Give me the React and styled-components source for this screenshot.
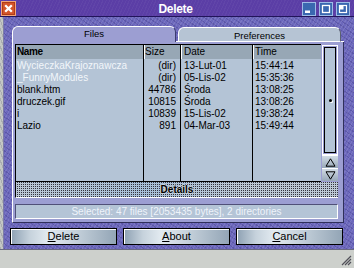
import React from 'react';
import styled, { createGlobalStyle } from 'styled-components';

const Global = createGlobalStyle`
  html, body { margin: 0; padding: 0; background: #cdd0cc; }
  body { width: 354px; height: 268px; overflow: hidden; font-family: "Liberation Sans", Arial, sans-serif; }
  * { box-sizing: border-box; }
`;

const Window = styled.div`
  width: 354px;
  height: 268px;
  display: flex;
  flex-direction: column;
  overflow: hidden;
`;

const TitleBar = styled.div`
  height: 17px;
  flex: none;
  background-color: #5b3ea6;
  background-image: repeating-linear-gradient(115deg, rgba(255,255,255,0.04) 0 1px, transparent 1px 3px);
  border-bottom: 1px solid #21145a;
  display: grid;
  grid-template-columns: 1fr auto 1fr;
  align-items: start;
  padding: 1px 4px 0 1px;
`;

const Title = styled.div`
  color: #fff;
  font-weight: bold;
  font-size: 12px;
  letter-spacing: -0.3px;
  line-height: 15px;
  padding-top: 1px;
`;

const WinButtons = styled.div`
  justify-self: end;
  display: flex;
  gap: 3px;
  padding-top: 1px;
`;

const Body = styled.div`
  flex: 1;
  display: flex;
  min-height: 0;
`;

const LeftEdge = styled.div`
  width: 4px;
  flex: none;
  background-color: #c4c8c4;
  background-image: repeating-linear-gradient(70deg, rgba(120,120,140,0.35) 0 1px, transparent 1px 3px);
  border-right: 1px solid #7c7ca8;
`;

const Content = styled.div`
  flex: 1;
  background-color: #6c68bc;
  background-image:
    repeating-linear-gradient(120deg, rgba(255,255,255,0.10) 0 1px, transparent 1px 3px),
    repeating-linear-gradient(35deg, rgba(30,20,90,0.20) 0 1px, transparent 1px 4px);
  display: flex;
  flex-direction: column;
  padding: 9px 0 4px;
`;

const TabRow = styled.div`
  height: 16px;
  margin: 0 10px 0 8px;
  display: flex;
  align-items: flex-end;
`;

const Tab = styled.div`
  width: ${p => p.$w}px;
  height: ${p => (p.$active ? 16 : 15)}px;
  flex: none;
  background: ${p => (p.$active ? '#9c9ed2' : '#b6c4d4')};
  border-top: 1px solid #fff;
  border-left: 1px solid #fff;
  border-right: 1px solid ${p => (p.$active ? '#3c3c70' : '#5a6070')};
  border-bottom: ${p => (p.$active ? 'none' : '1px solid #fff')};
  border-radius: 6px 6px 0 0;
  font-size: 9.5px;
  color: #000;
  text-align: center;
  line-height: 13px;
  padding-top: ${p => (p.$active ? 0 : 1)}px;
`;

const TabGap = styled.div`
  flex: ${p => (p.$fill ? 1 : 'none')};
  width: ${p => p.$w || 0}px;
  height: 1px;
  background: #fff;
`;

const Panel = styled.div`
  height: 181px;
  margin: 0 10px 0 8px;
  background: #9c9ed2;
  border-left: 1px solid #fff;
  border-right: 1px solid #30305a;
  border-bottom: 1px solid #30305a;
  padding: 2px 5px 0 2px;
  display: flex;
  flex-direction: column;
`;

const ListRow = styled.div`
  display: flex;
  height: 138px;
`;

const List = styled.div`
  width: 306px;
  height: 138px;
  background: #b4c4d6;
  border-top: 1px solid #000;
  border-left: 1px solid #000;
  border-bottom: 1px solid #000;
  display: grid;
  grid-template-columns: 128px 37px 72px 1fr;
`;

const Column = styled.div`
  display: flex;
  flex-direction: column;
  border-right: ${p => (p.$last ? 'none' : '1px solid #000')};
  font-size: 10px;
  text-align: ${p => (p.$right ? 'right' : 'left')};
`;

const HeadCell = styled.div`
  height: 14px;
  background: #97a7b5;
  box-shadow: ${p => (p.$first ? 'none' : 'inset 1px 0 0 #fff')};
  line-height: 14px;
  padding-left: ${p => p.$pl}px;
  font-weight: ${p => (p.$bold ? 'bold' : 'normal')};
  text-align: left;
  letter-spacing: ${p => (p.$bold ? '-0.4px' : '0')};
`;

const Cells = styled.div`
  padding-top: 1px;
`;

const Cell = styled.div`
  height: 12px;
  line-height: 12px;
  white-space: nowrap;
  color: ${p => (p.$dir ? '#f2f6fa' : '#000')};
  padding-left: ${p => p.$pl || 0}px;
  padding-right: ${p => p.$pr || 0}px;
`;

const Scroll = styled.div`
  width: 17px;
  height: 137px;
  display: flex;
  flex-direction: column;
`;

const Track = styled.div`
  flex: 1;
  margin: 1px 0 0 1px;
  border: 1px solid #fff;
  padding: 1px;
  display: flex;
`;

const TrackInner = styled.div`
  flex: 1;
  border: 1px solid #000;
  background: #b4c4d6;
  display: flex;
  align-items: center;
  justify-content: center;
`;

const Knob = styled.div`
  width: 3px;
  height: 3px;
  border-radius: 50%;
  background: #000;
  box-shadow: 1px 1px 0 #fff;
  margin-left: 1px;
`;

const ArrowBtn = styled.div`
  height: 13px;
  margin-left: 1px;
  background: linear-gradient(180deg, #d0dae4, #98a8b8);
  border-top: 1px solid #fff;
  display: flex;
  align-items: center;
  justify-content: center;
`;

const Details = styled.div`
  height: 16px;
  width: 323px;
  background-color: #bcc8d4;
  background-image:
    repeating-conic-gradient(#34343e 0 25%, transparent 0 100%),
    linear-gradient(90deg, rgba(0,0,0,0) 0%, rgba(140,180,220,0.45) 40%, rgba(0,0,0,0) 70%);
  background-size: 2px 2px, 100% 100%;
  border-left: 1px solid #000;
  border-bottom: 1px solid #fff;
  font-size: 10px;
  font-weight: bold;
  text-align: center;
  line-height: 15px;
  color: #000;
  text-shadow: 1px 0 0 #c8d2dc, -1px 0 0 #c8d2dc, 0 1px 0 #c8d2dc, 0 -1px 0 #c8d2dc;
`;

const Status = styled.div`
  margin-top: 6px;
  height: 15px;
  width: 323px;
  background: #b4c4d6;
  border: 1px solid;
  border-color: #505078 #fff #fff #505078;
  color: #eef3fa;
  font-size: 10px;
  line-height: 13px;
  text-align: center;
  white-space: nowrap;
`;

const ButtonRow = styled.div`
  margin: 5px 11px 0 6px;
  display: grid;
  grid-template-columns: repeat(3, 1fr);
  gap: 6px;
`;

const Button = styled.div`
  height: 17px;
  border: 1px solid #000;
  box-shadow: inset 1px 1px 0 #fff;
  background: linear-gradient(90deg, #8ea1b3 0%, #c6d2dc 18%, #e2eaf0 35%, #c4d0da 62%, #93a5b6 100%);
  font-size: 11px;
  line-height: 15px;
  text-align: center;
  color: #000;
`;

const Ul = styled.span`
  text-decoration: underline;
`;

const BottomBar = styled.div`
  height: 19px;
  flex: none;
  background: #cdd0cc;
  border-top: 1px solid #6a6a82;
  display: flex;
  justify-content: flex-end;
  align-items: flex-end;
  padding: 0 2px 2px 0;
`;

function CloseIcon() {
  return (
    <svg width="15" height="15" viewBox="0 0 15 15">
      <rect x="0.5" y="0.5" width="14" height="14" fill="#d4552a" stroke="#f3a579" />
      <rect x="1.5" y="1.5" width="12" height="12" fill="none" stroke="#b03c18" />
      <path d="M4.2 4.2 L10.8 10.8 M10.8 4.2 L4.2 10.8" stroke="#fff" strokeWidth="2.3" />
    </svg>
  );
}

function WinBtn({ kind }) {
  return (
    <svg width="14" height="14" viewBox="0 0 14 14">
      <rect x="0.5" y="0.5" width="13" height="13" fill="#3a68b0" stroke="#9dbbe6" />
      {kind === 'min' && <rect x="3" y="8.5" width="5" height="2.5" fill="#fff" />}
      {kind === 'max' && <rect x="3.5" y="3.5" width="7" height="7" fill="none" stroke="#fff" strokeWidth="1.3" />}
      {kind === 'restore' && (
        <g>
          <rect x="3.5" y="3.5" width="7" height="7" fill="none" stroke="#fff" strokeWidth="1.2" />
          <rect x="3" y="3" width="4.5" height="4.5" fill="#fff" />
        </g>
      )}
    </svg>
  );
}

function Tri({ up }) {
  return (
    <svg width="11" height="9" viewBox="0 0 11 9">
      {up ? (
        <path d="M5.5 0.8 L10 8.2 L1 8.2 Z" fill="none" stroke="#000" strokeWidth="1" />
      ) : (
        <path d="M1 0.8 L10 0.8 L5.5 8.2 Z" fill="none" stroke="#000" strokeWidth="1" />
      )}
    </svg>
  );
}

function Grip() {
  return (
    <svg width="12" height="12" viewBox="0 0 12 12">
      <path d="M11 2 L2 11 M11 5 L5 11 M11 8 L8 11" stroke="#505058" strokeWidth="1.2" />
    </svg>
  );
}

const rows = [
  { name: 'WycieczkaKrajoznawcza', size: '(dir)', date: '13-Lut-01', time: '15:44:14', dir: true },
  { name: '_FunnyModules', size: '(dir)', date: '05-Lis-02', time: '15:35:36', dir: true },
  { name: 'blank.htm', size: '44786', date: 'Środa', time: '13:08:25' },
  { name: 'druczek.gif', size: '10815', date: 'Środa', time: '13:08:26' },
  { name: 'i', size: '10839', date: '15-Lis-02', time: '19:38:24' },
  { name: 'Lazio', size: '891', date: '04-Mar-03', time: '15:49:44' },
];

export default function App() {
  return (
    <Window>
      <Global />
      <TitleBar>
        <CloseIcon />
        <Title>Delete</Title>
        <WinButtons>
          <WinBtn kind="min" />
          <WinBtn kind="max" />
          <WinBtn kind="restore" />
        </WinButtons>
      </TitleBar>
      <Body>
        <LeftEdge />
        <Content>
          <TabRow>
            <Tab $active $w={164}>Files</Tab>
            <TabGap $w={2} />
            <Tab $w={163}>Preferences</Tab>
            <TabGap $fill />
          </TabRow>
          <Panel>
            <ListRow>
              <List>
                <Column>
                  <HeadCell $first $bold $pl={1}>Name</HeadCell>
                  <Cells>
                    {rows.map(r => (
                      <Cell key={r.name} $dir={r.dir} $pl={1}>{r.name}</Cell>
                    ))}
                  </Cells>
                </Column>
                <Column $right>
                  <HeadCell $pl={1}>Size</HeadCell>
                  <Cells>
                    {rows.map(r => (
                      <Cell key={r.name} $pr={4}>{r.size}</Cell>
                    ))}
                  </Cells>
                </Column>
                <Column>
                  <HeadCell $pl={3}>Date</HeadCell>
                  <Cells>
                    {rows.map(r => (
                      <Cell key={r.name} $pl={3}>{r.date}</Cell>
                    ))}
                  </Cells>
                </Column>
                <Column $last>
                  <HeadCell $pl={2}>Time</HeadCell>
                  <Cells>
                    {rows.map(r => (
                      <Cell key={r.name} $pl={2}>{r.time}</Cell>
                    ))}
                  </Cells>
                </Column>
              </List>
              <Scroll>
                <Track>
                  <TrackInner>
                    <Knob />
                  </TrackInner>
                </Track>
                <ArrowBtn><Tri up /></ArrowBtn>
                <ArrowBtn><Tri /></ArrowBtn>
              </Scroll>
            </ListRow>
            <Details>Details</Details>
            <Status>Selected: 47 files [2053435 bytes], 2 directories</Status>
          </Panel>
          <ButtonRow>
            <Button><Ul>D</Ul>elete</Button>
            <Button><Ul>A</Ul>bout</Button>
            <Button><Ul>C</Ul>ancel</Button>
          </ButtonRow>
        </Content>
      </Body>
      <BottomBar>
        <Grip />
      </BottomBar>
    </Window>
  );
}
